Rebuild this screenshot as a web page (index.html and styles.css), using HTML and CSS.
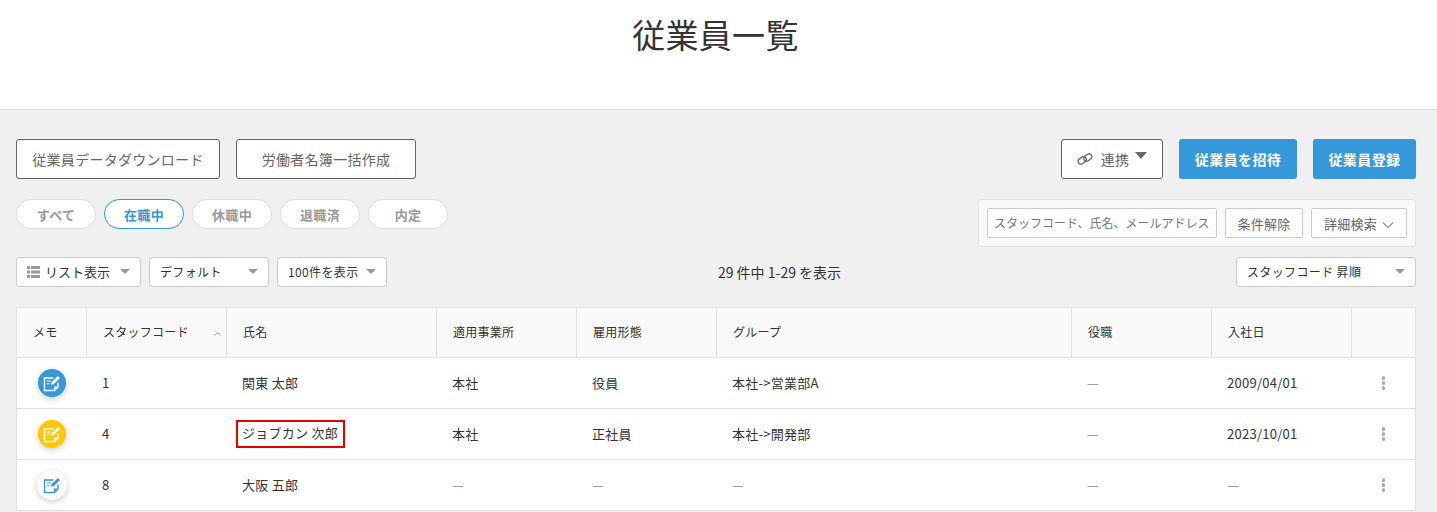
FILE: index.html
```html
<!DOCTYPE html>
<html lang="ja">
<head>
<meta charset="utf-8">
<title>従業員一覧</title>
<link rel="stylesheet" href="styles.css">
</head>
<body>
<svg class="defs" width="0" height="0" aria-hidden="true">
  <symbol id="memo" viewBox="0 0 18 18">
    <path d="M10.500 4H1.500v12.500h10l3.500-3.500V8.500" fill="none" stroke="currentColor" stroke-width="1.400"/>
    <path d="M3.800 7h4.600M3.800 9.700h2.800" fill="none" stroke="currentColor" stroke-width="1.100"/>
    <path d="M10.800 16v-3.600h4z" fill="currentColor"/>
    <path d="M8 10.800l.6-2.500L14.800 2l2.200 2-6.300 6.200z" fill="currentColor"/>
  </symbol>
</svg>
<header class="page-head"><h1>従業員一覧</h1></header>
<main class="content">
  <div class="row actions">
    <div class="group">
      <button class="btn outline w204">従業員データダウンロード</button>
      <button class="btn outline w180">労働者名簿一括作成</button>
    </div>
    <div class="group">
      <button class="btn outline link-btn">
        <svg class="link-icon" width="16" height="16" viewBox="0 0 16 16" fill="none" stroke="#666" stroke-width="1.300"><rect x="0.900" y="6.600" width="8.600" height="5.600" rx="2.800" transform="rotate(-38 5.200 9.400)"/><rect x="6.500" y="3.800" width="8.600" height="5.600" rx="2.800" transform="rotate(-38 10.800 6.600)"/></svg>
        <span>連携</span><i class="caret-big"></i>
      </button>
      <button class="btn primary w118">従業員を招待</button>
      <button class="btn primary w103">従業員登録</button>
    </div>
  </div>
  <div class="row filters">
    <div class="pills">
      <span class="pill">すべて</span>
      <span class="pill active">在職中</span>
      <span class="pill">休職中</span>
      <span class="pill">退職済</span>
      <span class="pill">内定</span>
    </div>
    <div class="search">
      <span class="search-input">スタッフコード、氏名、メールアドレス</span>
      <button class="mini w77">条件解除</button>
      <button class="mini w96">詳細検索<svg class="chev" width="12" height="8" viewBox="0 0 12 8" fill="none" stroke="#999" stroke-width="1.300"><path d="M1 1.500l5 5 5-5"/></svg></button>
    </div>
  </div>
  <div class="row views">
    <div class="selects">
      <div class="select s125"><svg class="list-icon" width="13" height="12" viewBox="0 0 13 12" fill="#999"><path d="M0 0h3v3H0zM4 0h9v3H4zM0 4.500h3v3H0zM4 4.500h9v3H4zM0 9h3v3H0zM4 9h9v3H4z"/></svg><span class="big">リスト表示</span><i class="caret"></i></div>
      <div class="select s120"><span>デフォルト</span><i class="caret"></i></div>
      <div class="select s110"><span>100件を表示</span><i class="caret"></i></div>
    </div>
    <div class="count">29 件中 1-29 を表示</div>
    <div class="select s180"><span>スタッフコード 昇順</span><i class="caret"></i></div>
  </div>
  <table class="staff">
    <colgroup>
      <col class="c1"><col class="c2"><col class="c3"><col class="c4"><col class="c5"><col class="c6"><col class="c7"><col class="c8"><col class="c9">
    </colgroup>
    <thead>
      <tr>
        <th class="memo-h">メモ</th>
        <th class="sort">スタッフコード<svg class="sort-icon" width="7" height="4" viewBox="0 0 7 4" fill="none" stroke="#aaa"><path d="M.5 3.500l3-3 3 3"/></svg></th>
        <th>氏名</th><th>適用事業所</th><th>雇用形態</th><th>グループ</th><th>役職</th><th>入社日</th><th></th>
      </tr>
    </thead>
    <tbody>
      <tr>
        <td class="memo"><span class="memo-btn blue"><svg width="18" height="18"><use href="#memo"/></svg></span></td>
        <td>1</td><td>関東 太郎</td><td>本社</td><td>役員</td><td>本社-&gt;営業部A</td><td class="dash">—</td><td>2009/04/01</td>
        <td class="more"><i></i><i></i><i></i></td>
      </tr>
      <tr>
        <td class="memo"><span class="memo-btn yellow"><svg width="18" height="18"><use href="#memo"/></svg></span></td>
        <td>4</td><td><span class="marked">ジョブカン 次郎</span></td><td>本社</td><td>正社員</td><td>本社-&gt;開発部</td><td class="dash">—</td><td>2023/10/01</td>
        <td class="more"><i></i><i></i><i></i></td>
      </tr>
      <tr>
        <td class="memo"><span class="memo-btn white"><svg width="18" height="18"><use href="#memo"/></svg></span></td>
        <td>8</td><td>大阪 五郎</td><td class="dash">—</td><td class="dash">—</td><td class="dash">—</td><td class="dash">—</td><td class="dash">—</td>
        <td class="more"><i></i><i></i><i></i></td>
      </tr>
    </tbody>
  </table>
</main>
</body>
</html>
```
FILE: styles.css
```css
* { box-sizing: border-box; }
html, body { margin: 0; height: 512px; overflow: hidden; }
body {
  background: #f0f0f0;
  color: #333;
  font-family: "Noto Sans CJK JP", "Noto Sans", sans-serif;
  font-size: 13px;
  letter-spacing: .02em;
}
.defs { position: absolute; }
.page-head {
  height: 110px;
  background: #fff;
  border-bottom: 1px solid #ddd;
  text-align: center;
  padding-right: 6px;
}
.page-head h1 {
  margin: 0;
  padding-top: 8px;
  font-size: 33px;
  font-weight: 400;
  line-height: 52px;
  color: #333;
}
.content { padding: 29px 21px 0 16px; }
.row { display: flex; justify-content: space-between; }
.group { display: flex; gap: 16px; }
.actions { height: 40px; }
.btn {
  height: 40px;
  border-radius: 3px;
  font: inherit;
  font-size: 14px;
  letter-spacing: .02em;
  padding: 0 0 1px;
}
.outline { background: #fff; border: 1px solid #666; color: #666; }
.primary { background: #3498db; border: 0; color: #fff; font-weight: 700; letter-spacing: .03em; }
.w204 { width: 204px; }
.w180 { width: 180px; }
.w118 { width: 118px; }
.w103 { width: 103px; }
.link-btn {
  width: 102px;
  display: flex;
  align-items: center;
  justify-content: center;
}
.link-icon { margin-right: 8px; }
.caret-big {
  width: 0; height: 0;
  margin: 0 0 6px 6px;
  border-left: 6px solid transparent;
  border-right: 6px solid transparent;
  border-top: 7px solid #666;
}
.filters { margin-top: 20px; height: 48px; }
.pills { display: flex; gap: 8px; }
.pill {
  width: 80px;
  height: 30px;
  background: #fff;
  border: 1px solid #ddd;
  border-radius: 15px;
  color: #999;
  font-weight: 700;
  display: flex;
  align-items: center;
  justify-content: center;
}
.pill.active { border-color: #3498db; color: #3498db; }
.search {
  width: 438px;
  height: 48px;
  background: #f9f9f9;
  border: 1px solid #e2e2e2;
  border-radius: 3px;
  padding: 8px;
  display: flex;
  gap: 8px;
}
.search-input {
  width: 230px;
  height: 30px;
  background: #fff;
  border: 1px solid #ccc;
  border-radius: 2px;
  color: #777;
  font-size: 12px;
  letter-spacing: 0;
  padding-left: 6px;
  line-height: 28px;
  white-space: nowrap;
}
.mini {
  height: 30px;
  background: #fff;
  border: 1px solid #ccc;
  border-radius: 2px;
  color: #666;
  font: inherit;
  letter-spacing: .02em;
  padding: 0;
  display: flex;
  align-items: center;
  justify-content: center;
}
.w77 { width: 78px; }
.w96 { width: 96px; }
.chev { margin-left: 5px; margin-top: 3px; }
.views { margin-top: 10px; height: 30px; align-items: center; }
.selects { display: flex; gap: 8px; }
.select {
  height: 30px;
  background: #fff;
  border: 1px solid #ccc;
  border-radius: 3px;
  color: #333;
  font-size: 12px;
  letter-spacing: .03em;
  display: flex;
  align-items: center;
  padding: 0 10px 1px;
  white-space: nowrap;
}
.select .big { font-size: 13px; letter-spacing: 0; }
.list-icon { margin-right: 5px; }
.caret {
  margin-left: auto;
  flex: none;
  width: 0; height: 0;
  border-left: 5px solid transparent;
  border-right: 5px solid transparent;
  border-top: 5px solid #999;
}
.s125 { width: 125px; }
.s120 { width: 120px; }
.s110 { width: 110px; }
.s180 { width: 180px; }
.count { margin-right: 64px; font-size: 14px; letter-spacing: 0; }
.staff {
  margin-top: 20px;
  width: 1400px;
  table-layout: fixed;
  border-collapse: separate;
  border-spacing: 0;
  background: #fff;
}
.c1 { width: 71px; }
.c2 { width: 140px; }
.c3 { width: 210px; }
.c4, .c5 { width: 140px; }
.c6 { width: 355px; }
.c7 { width: 140px; }
.c8 { width: 140px; }
.c9 { width: 64px; }
.staff th {
  height: 51px;
  background: #f9f9f9;
  border-top: 1px solid #e0e0e0;
  border-right: 1px solid #e0e0e0;
  border-bottom: 1px solid #e0e0e0;
  font-size: 12px;
  font-weight: 400;
  text-align: left;
  padding: 0 16px 2px;
  color: #333;
  position: relative;
}
.staff th:first-child { border-left: 1px solid #e0e0e0; }
.staff th.memo-h { padding-left: 16px; }
.sort-icon { position: absolute; right: 5px; top: 24px; }
.staff td {
  height: 51px;
  border-bottom: 1px solid #e0e0e0;
  padding: 0 15px 2px;
  white-space: nowrap;
}
.staff tr td:first-child { border-left: 1px solid #e0e0e0; }
.staff tr td:last-child { border-right: 1px solid #e0e0e0; }
.staff td.dash { color: #888; }
.staff td.memo { padding: 0; text-align: center; }
.memo-btn {
  width: 28px;
  height: 28px;
  border-radius: 50%;
  display: inline-flex;
  align-items: center;
  justify-content: center;
  box-shadow: 0 2px 6px rgba(0,0,0,.2);
  vertical-align: middle;
}
.memo-btn.blue { background: #3498db; color: #fff; }
.memo-btn.yellow { background: #ffc800; color: #fff; }
.memo-btn.white { background: #fff; color: #3498db; width: 30px; height: 30px; }
.marked {
  display: inline-block;
  border: 2px solid #e60000;
  height: 28px;
  margin-top: 2px;
  line-height: 22px;
  padding: 0 5px 0 4px;
  margin-left: -6px;
}
.staff td.more { padding: 0; text-align: center; font-size: 0; }
.more i {
  display: block;
  width: 3.5px;
  height: 3.5px;
  margin: 1.5px auto;
  border-radius: 50%;
  background: #aaa;
}
```
